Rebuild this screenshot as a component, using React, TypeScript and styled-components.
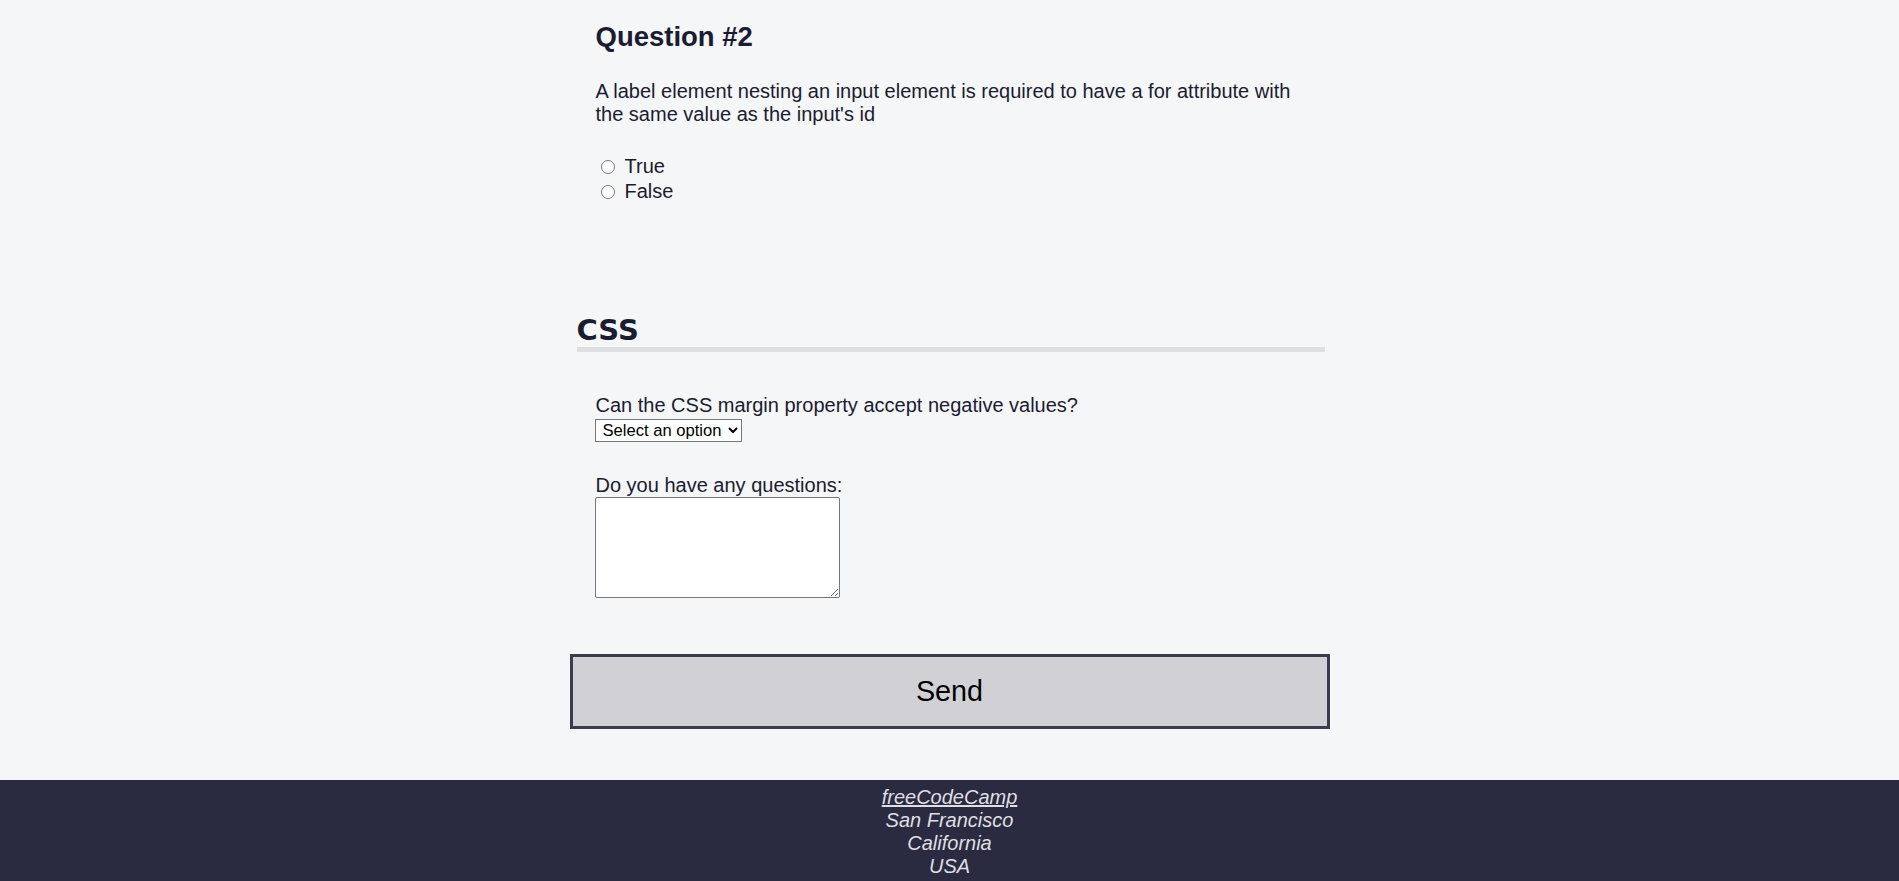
import React from "react";
import styled, { createGlobalStyle } from "styled-components";

const GlobalStyle = createGlobalStyle`
  html, body {
    margin: 0;
    padding: 0;
    background: #f5f6f7;
  }
  body {
    color: #1b1b32;
    font-family: "Liberation Sans", Arial, Helvetica, sans-serif;
    font-size: 20px;
    line-height: 23px;
  }
  * { box-sizing: border-box; }
`;

const Page = styled.div`
  display: flex;
  flex-direction: column;
  min-height: 881px;
`;

const Main = styled.main`
  width: 760px;
  margin: 0 auto;
  display: flex;
  flex-direction: column;
  padding-top: 21px;
`;

const Section = styled.section<{ $gapTop?: number }>`
  display: flex;
  flex-direction: column;
  margin: ${(p) => p.$gapTop ?? 0}px 5px 0 7px;
`;

const QuestionBlock = styled.div`
  display: flex;
  flex-direction: column;
  padding-left: 19px;
`;

const QuestionTitle = styled.h3`
  margin: 0;
  font-size: 27.5px;
  line-height: 32px;
  font-weight: 700;
  color: #1b1b32;
`;

const Prompt = styled.p`
  margin: 27px 0 0;
  max-width: 712px;
  font-size: 20px;
  line-height: 23px;
`;

const Options = styled.ul`
  list-style: none;
  margin: 28px 0 0;
  padding: 0;
  display: flex;
  flex-direction: column;
`;

const OptionRow = styled.li`
  display: flex;
  align-items: center;
  height: 25px;
`;

const OptionLabel = styled.label`
  display: flex;
  align-items: center;
  font-size: 20px;
  line-height: 25px;
  cursor: pointer;
`;

const Radio = styled.input`
  width: 14px;
  height: 14px;
  margin: 0 10px 0 5px;
`;

const SectionTitle = styled.h2`
  margin: 0;
  font-family: "DejaVu Sans", Verdana, Tahoma, sans-serif;
  font-size: 29px;
  line-height: 34px;
  font-weight: 700;
  color: #1b1b32;
  border-bottom: 5px solid #dfdfe2;
`;

const Field = styled.div<{ $top: number }>`
  display: flex;
  flex-direction: column;
  align-items: flex-start;
  padding-left: 18px;
  margin-top: ${(p) => p.$top}px;
`;

const FieldLabel = styled.label`
  display: block;
  padding-left: 1px;
  font-size: 20px;
  line-height: 23px;
`;

const Select = styled.select`
  display: block;
  margin-top: 2px;
  width: 147px;
  height: 23px;
  padding: 0 0 0 3px;
  font-family: "Liberation Sans", Arial, sans-serif;
  font-size: 16.6px;
  color: #000;
  background: #fff;
  border: 1px solid #767676;
  border-radius: 0;
`;

const TextArea = styled.textarea`
  display: block;
  width: 245px;
  height: 101px;
  border: 1px solid #767676;
  border-radius: 2px;
  background: #fff;
  font-family: "Liberation Mono", monospace;
  font-size: 16px;
  resize: both;
`;

const SendButton = styled.button`
  display: block;
  width: 760px;
  height: 75px;
  margin-top: 56px;
  background: #d0d0d5;
  border: 3px solid #3b3b4f;
  font-family: "Liberation Sans", Arial, sans-serif;
  font-size: 28.75px;
  color: #000;
  cursor: pointer;
`;

const Footer = styled.footer`
  margin-top: 51px;
  background: #2a2a40;
  display: flex;
  justify-content: center;
  padding: 6px 0 3px;
`;

const Address = styled.address`
  font-style: italic;
  text-align: center;
  color: #dfdfe2;
  font-size: 20px;
  line-height: 23px;
`;

const FooterLink = styled.a`
  color: #dfdfe2;
  text-decoration: underline;
`;

export default function App() {
  return (
    <>
      <GlobalStyle />
      <Page>
        <Main>
          <Section>
            <QuestionBlock>
              <QuestionTitle>Question #2</QuestionTitle>
              <Prompt>
                A label element nesting an input element is required to have a for attribute with the
                same value as the input's id
              </Prompt>
              <Options>
                <OptionRow>
                  <OptionLabel>
                    <Radio type="radio" name="q2" value="true" />
                    True
                  </OptionLabel>
                </OptionRow>
                <OptionRow>
                  <OptionLabel>
                    <Radio type="radio" name="q2" value="false" />
                    False
                  </OptionLabel>
                </OptionRow>
              </Options>
            </QuestionBlock>
          </Section>
          <Section $gapTop={109}>
            <SectionTitle>CSS</SectionTitle>
            <Field $top={42}>
              <FieldLabel htmlFor="css-margin">Can the CSS margin property accept negative values?</FieldLabel>
              <Select id="css-margin" defaultValue="">
                <option value="">Select an option</option>
                <option value="yes">Yes</option>
                <option value="no">No</option>
              </Select>
            </Field>
            <Field $top={32}>
              <FieldLabel htmlFor="questions">Do you have any questions:</FieldLabel>
              <TextArea id="questions" />
            </Field>
          </Section>
          <SendButton type="submit">Send</SendButton>
        </Main>
        <Footer>
          <Address>
            <FooterLink href="#">freeCodeCamp</FooterLink>
            <br />
            San Francisco
            <br />
            California
            <br />
            USA
          </Address>
        </Footer>
      </Page>
    </>
  );
}
